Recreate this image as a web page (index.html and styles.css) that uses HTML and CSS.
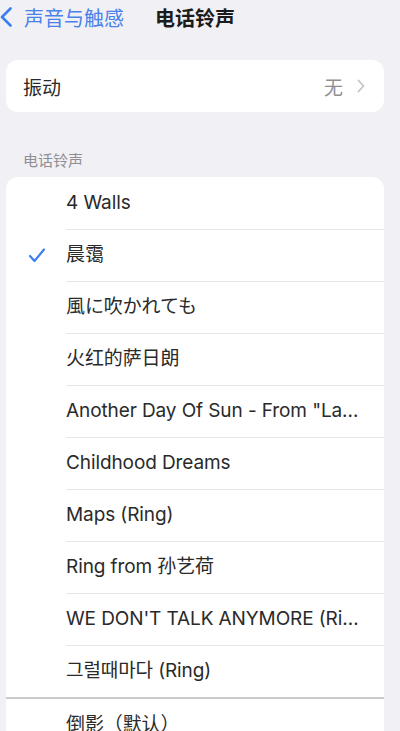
FILE: index.html
```html
<!DOCTYPE html>
<html lang="zh-CN">
<head>
  <meta charset="UTF-8" />
  <meta name="viewport" content="width=device-width, initial-scale=1.0" />
  <title>电话铃声</title>
  <link rel="stylesheet" href="styles.css">
</head>
<body>

  <header class="nav">
    <a class="back" href="#">
      <svg width="13" height="20" viewBox="0 0 13 20"><path d="M10.5 1.5 L2 10 L10.5 18.5" fill="none" stroke="#3d7ff0" stroke-width="2.6" stroke-linecap="round" stroke-linejoin="round"/></svg>
      <span>声音与触感</span>
    </a>
    <h1>电话铃声</h1>
  </header>

  <section class="card">
    <div class="fila fila-vibra">
      <span class="nombre">振动</span>
      <span class="valor">无</span>
      <svg class="flecha" width="8" height="14" viewBox="0 0 8 14"><path d="M1.5 1.5 L6.5 7 L1.5 12.5" fill="none" stroke="#c4c4c8" stroke-width="1.8" stroke-linecap="round" stroke-linejoin="round"/></svg>
    </div>
  </section>

  <h2 class="titulo-seccion">电话铃声</h2>

  <section class="card lista">
    <div class="fila"><span class="check"></span><span class="nombre">4 Walls</span></div>
    <div class="fila">
      <span class="check">
        <svg width="18" height="15" viewBox="0 0 18 15"><path d="M2 8 L6.5 13 L16 1.5" fill="none" stroke="#3d7ff0" stroke-width="2.2" stroke-linecap="round" stroke-linejoin="round"/></svg>
      </span>
      <span class="nombre">晨霭</span>
    </div>
    <div class="fila"><span class="check"></span><span class="nombre">風に吹かれても</span></div>
    <div class="fila"><span class="check"></span><span class="nombre">火红的萨日朗</span></div>
    <div class="fila"><span class="check"></span><span class="nombre">Another Day Of Sun - From "La La Land"</span></div>
    <div class="fila"><span class="check"></span><span class="nombre">Childhood Dreams</span></div>
    <div class="fila"><span class="check"></span><span class="nombre">Maps (Ring)</span></div>
    <div class="fila"><span class="check"></span><span class="nombre">Ring from 孙艺荷</span></div>
    <div class="fila"><span class="check"></span><span class="nombre">WE DON'T TALK ANYMORE (Ring)</span></div>
    <div class="fila"><span class="check"></span><span class="nombre">그럴때마다 (Ring)</span></div>
    <div class="fila fila-default"><span class="check"></span><span class="nombre">倒影（默认）</span></div>
  </section>

</body>
</html>
```

FILE: styles.css
```css
body {
  background-color: #f0f0f5;
  font-family: Inter, "Noto Sans CJK SC", "Noto Sans CJK JP", "Noto Sans CJK KR", sans-serif;
  color: #2a2a2a;
  margin: 0;
  overflow: hidden;
}

.nav {
  display: flex;
  align-items: center;
  height: 34px;
}
.back {
  display: flex;
  align-items: center;
  gap: 11px;
  text-decoration: none;
  color: #4a82ea;
  font-size: 20px;
  width: 155px;
}
.nav h1 {
  margin: 0;
  font-size: 20px;
  font-weight: bold;
  color: #1c1c1c;
}

.card {
  background: #fff;
  margin: 26px 16px 0 6px;
  border-radius: 12px;
  overflow: hidden;
}
.fila {
  display: flex;
  align-items: center;
  height: 52px;
  font-size: 19px;
}
.fila-vibra {
  padding: 0 19px 0 17px;
}
.fila-vibra .nombre {
  flex: 1;
}
.fila-vibra .valor {
  color: #8e8e93;
  margin-right: 14px;
}

.titulo-seccion {
  margin: 37px 0 7px 23px;
  font-size: 15px;
  font-weight: normal;
  color: #8e8e93;
}

.lista {
  margin-top: 0;
}
.check {
  width: 60px;
  flex-shrink: 0;
  display: flex;
  padding-left: 22px;
  box-sizing: border-box;
}
.lista .nombre {
  flex: 1;
  min-width: 0;
  height: 100%;
  line-height: 51px;
  border-bottom: 1px solid #e6e6ea;
  white-space: nowrap;
  overflow: hidden;
  text-overflow: ellipsis;
  letter-spacing: -0.1px;
  padding-right: 24px;
}
.fila-default {
  border-top: 2px solid #c9c9ce;
}
.fila-default .nombre,
.lista .fila:nth-last-child(2) .nombre {
  border-bottom: none;
}
```
